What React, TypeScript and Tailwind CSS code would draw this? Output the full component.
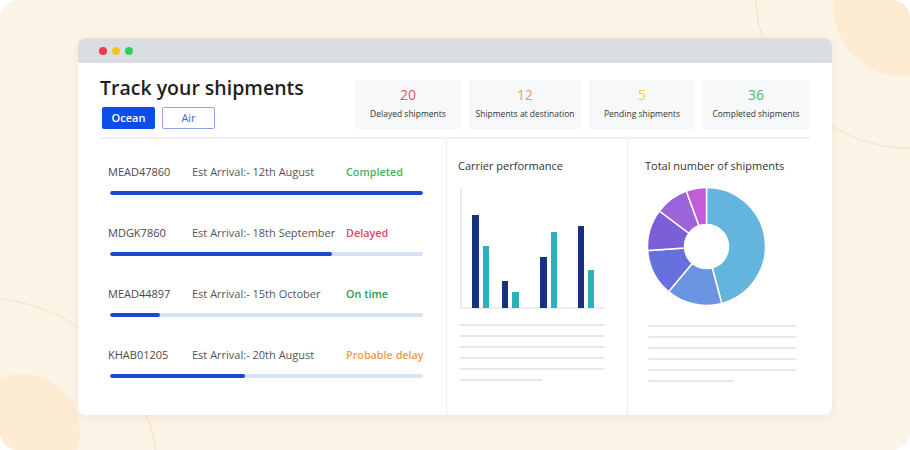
import React from "react";

const stats = [
  { value: "20", label: "Delayed shipments", color: "text-[#e0566c]", w: "w-[106px]" },
  { value: "12", label: "Shipments at destination", color: "text-[#f09c52]", w: "w-[112px]" },
  { value: "5", label: "Pending shipments", color: "text-[#f2d33e]", w: "w-[106px]" },
  { value: "36", label: "Completed shipments", color: "text-[#4cbf68]", w: "w-[106px]" },
];

const shipments = [
  { id: "MEAD47860", eta: "Est Arrival:- 12th August", status: "Completed", color: "text-[#45b35a]", pct: 100 },
  { id: "MDGK7860", eta: "Est Arrival:- 18th September", status: "Delayed", color: "text-[#e0445e]", pct: 71 },
  { id: "MEAD44897", eta: "Est Arrival:- 15th October", status: "On time", color: "text-[#2f9e44]", pct: 16 },
  { id: "KHAB01205", eta: "Est Arrival:- 20th August", status: "Probable delay", color: "text-[#f39a45]", pct: 43 },
];

// [x, width, top] in chart coords, base at y=125
const bars = [
  [14, 7, 32, "#17307f"],
  [25, 6, 63, "#2bb1b9"],
  [44, 6, 98, "#17307f"],
  [54, 7, 109, "#2bb1b9"],
  [82, 7, 74, "#17307f"],
  [93, 6, 49, "#2bb1b9"],
  [120, 6, 43, "#17307f"],
  [130, 6, 87, "#2bb1b9"],
] as const;

const slices = [
  [0, 165, "#64b5dd"],
  [165, 220, "#6a93e2"],
  [220, 266, "#6771de"],
  [266, 307, "#7a5fd9"],
  [307, 340, "#9b64d8"],
  [340, 360, "#c25cd8"],
] as const;

function pt(cx: number, cy: number, r: number, a: number) {
  const rad = (a * Math.PI) / 180;
  return [cx + r * Math.sin(rad), cy - r * Math.cos(rad)];
}

function slicePath(a0: number, a1: number) {
  const cx = 61.5, cy = 63.5, R = 59, r = 22;
  const [x0, y0] = pt(cx, cy, R, a0);
  const [x1, y1] = pt(cx, cy, R, a1);
  const [x2, y2] = pt(cx, cy, r, a1);
  const [x3, y3] = pt(cx, cy, r, a0);
  const large = a1 - a0 > 180 ? 1 : 0;
  return `M${x0} ${y0} A${R} ${R} 0 ${large} 1 ${x1} ${y1} L${x2} ${y2} A${r} ${r} 0 ${large} 0 ${x3} ${y3} Z`;
}

function Lines({ w, last }: { w: string; last: string }) {
  return (
    <div className="mt-[14px] flex flex-col gap-[9px]">
      {[0, 1, 2, 3, 4].map((i) => (
        <div key={i} className={`h-[2px] rounded-full bg-[#e6e8ec] ${w}`} />
      ))}
      <div className={`h-[2px] rounded-full bg-[#e6e8ec] ${last}`} />
    </div>
  );
}

export default function App() {
  return (
    <div className="relative w-[910px] h-[450px] bg-white overflow-hidden font-['Open_Sans',sans-serif]">
      <div className="absolute inset-0 rounded-[18px] bg-[#fdf4e8] overflow-hidden">
        {/* background decorations */}
        <div className="absolute left-[833px] top-[-67px] w-[144px] h-[144px] rounded-full bg-[#fdecd2]" />
        <div className="absolute left-[755px] top-[-165px] w-[314px] h-[314px] rounded-full border border-[#f7e0c2]" />
        <div className="absolute left-[-36px] top-[374px] w-[116px] h-[116px] rounded-full bg-[#fdecd2]" />
        <div className="absolute left-[-198px] top-[297px] w-[356px] h-[356px] rounded-full border border-[#f7e0c2]" />
      </div>

      <div className="relative pt-[38px] pl-[78px]">
        <div className="w-[754px] h-[377px] rounded-lg bg-white overflow-hidden shadow-[0_2px_12px_rgba(150,110,60,0.12)] flex flex-col">
          {/* title bar */}
          <div className="h-[25px] shrink-0 bg-[#dadee3] flex items-center pl-[21px] gap-[5px]">
            <span className="w-[8px] h-[8px] rounded-full bg-[#ec3a4e]" />
            <span className="w-[8px] h-[8px] rounded-full bg-[#f0c419]" />
            <span className="w-[8px] h-[8px] rounded-full bg-[#2fcf5a]" />
          </div>

          <div className="flex-1 px-[22px] flex flex-col">
            {/* header */}
            <div className="h-[74px] flex justify-between">
              <div className="pt-[12px]">
                <h1 className="text-[19.5px] leading-[26px] font-semibold text-[#1f1f1f]">Track your shipments</h1>
                <div className="mt-[6px] ml-[2px] flex gap-[7px]">
                  <button className="w-[53px] h-[22px] rounded-[2px] bg-[#0b4de9] text-white text-[11px] font-semibold">
                    Ocean
                  </button>
                  <button className="w-[53px] h-[22px] rounded-[2px] border border-[#8ea3e6] text-[#3d63d8] text-[11px] font-medium">
                    Air
                  </button>
                </div>
              </div>
              <div className="pt-[17px] pr-[1px] flex gap-[8px]">
                {stats.map((s) => (
                  <div key={s.label} className={`${s.w} h-[49px] bg-[#f7f8fa] flex flex-col items-center pt-[7px]`}>
                    <div className={`text-[14px] leading-[15px] font-medium ${s.color}`}>{s.value}</div>
                    <div className="mt-[6px] text-[8.5px] leading-[11px] text-[#333]">{s.label}</div>
                  </div>
                ))}
              </div>
            </div>
            <div className="h-[2px] bg-[#eef0f3]" />

            {/* columns */}
            <div className="flex flex-1">
              <div className="w-[347px] border-r border-[#eceef1] pt-[25px]">
                {shipments.map((s) => (
                  <div key={s.id} className="h-[61px]">
                    <div className="flex items-center h-[16px] text-[11px]">
                      <span className="ml-[8px] w-[84px] text-[#4a4a4a]">{s.id}</span>
                      <span className="w-[154px] text-[#555]">{s.eta}</span>
                      <span className={`font-semibold text-[10.8px] ${s.color}`}>{s.status}</span>
                    </div>
                    <div className="mt-[11px] ml-[10px] w-[313px] h-[4px] rounded-full bg-[#d6e2f6] overflow-hidden">
                      <div className="h-full rounded-full bg-[#1b48d6]" style={{ width: `${s.pct}%` }} />
                    </div>
                  </div>
                ))}
              </div>

              <div className="w-[181px] border-r border-[#eceef1] pl-[11px] pt-[19px]">
                <div className="text-[11px] leading-[16px] text-[#333]">Carrier performance</div>
                <svg className="mt-[9px]" width="152" height="127" viewBox="0 0 152 127">
                  <line x1="3" y1="5" x2="3" y2="125" stroke="#e4e6ea" strokeWidth="1.5" />
                  <line x1="3" y1="125" x2="147" y2="125" stroke="#e4e6ea" strokeWidth="1.5" />
                  {bars.map(([x, w, top, c], i) => (
                    <rect key={i} x={x} y={top} width={w} height={125 - top} fill={c} />
                  ))}
                </svg>
                <div className="ml-[1px]">
                  <Lines w="w-[146px]" last="w-[84px]" />
                </div>
              </div>

              <div className="flex-1 pl-[17px] pt-[19px]">
                <div className="text-[11px] leading-[16px] text-[#333]">Total number of shipments</div>
                <svg className="mt-[9px]" width="130" height="128" viewBox="0 0 130 128">
                  {slices.map(([a0, a1, c], i) => (
                    <path key={i} d={slicePath(a0, a1)} fill={c} stroke="#ffffff" strokeWidth="1.5" />
                  ))}
                </svg>
                <div className="ml-[3px]">
                  <Lines w="w-[148px]" last="w-[86px]" />
                </div>
              </div>
            </div>
          </div>
        </div>
      </div>
    </div>
  );
}
